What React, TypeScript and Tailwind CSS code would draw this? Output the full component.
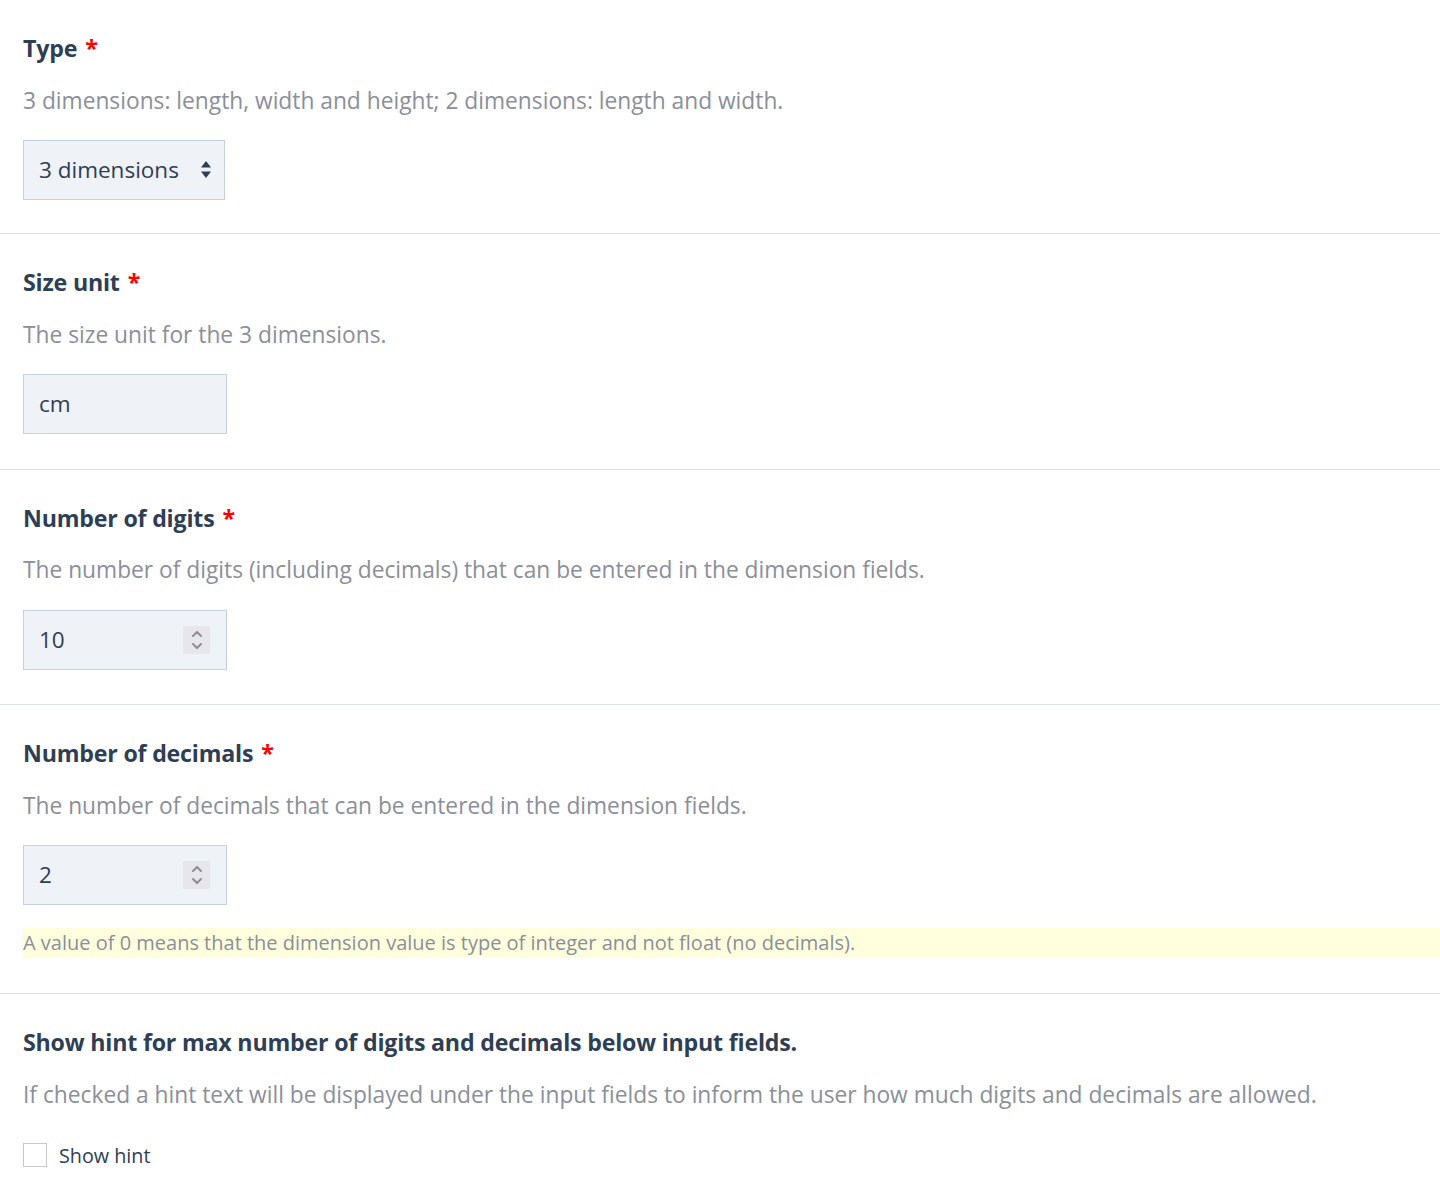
import React from "react";

const font = { fontFamily: '"Open Sans", "Noto Sans", sans-serif' };

function Label({ text, required }: { text: string; required?: boolean }) {
  return (
    <div className="text-[23.2px] leading-[32px] font-bold text-[#2e3e55] tracking-[-0.2px]">
      {text}
      {required && <span className="text-[#ff0000] ml-[8px]">*</span>}
    </div>
  );
}

function Desc({ text }: { text: string }) {
  return <div className="mt-[20.5px] text-[22.75px] leading-[32px] text-[#8a8f9b]">{text}</div>;
}

function Spinner() {
  return (
    <div className="w-[27px] h-[28px] bg-[#e6e6eb] flex items-center justify-center">
      <svg width="14" height="22" viewBox="0 0 14 22" fill="none" stroke="#8e8e99" strokeWidth="2" strokeLinecap="round" strokeLinejoin="round">
        <polyline points="3,7 7,3 11,7" />
        <polyline points="3,15 7,19 11,15" />
      </svg>
    </div>
  );
}

function Section({ children, pb }: { children: React.ReactNode; pb: string }) {
  return <div className={"pl-[23px] pt-[32px] " + pb}>{children}</div>;
}

export default function App() {
  return (
    <div className="w-[1440px] min-h-[1182px] bg-white" style={font}>
      <Section pb="pb-[33.5px] border-b border-[#dde3eb]">
        <Label text="Type" required />
        <Desc text="3 dimensions: length, width and height; 2 dimensions: length and width." />
        <div className="mt-[23px] w-[202px] h-[60px] bg-[#eff3f8] border border-[#c5d1e0] flex items-center justify-between pl-[15px] pr-[13px]">
          <span className="text-[22.5px] text-[#2e3e55]">3 dimensions</span>
          <svg width="10" height="17" viewBox="0 0 10 17" fill="#2e3e55">
            <polygon points="5,0 10,6.5 0,6.5" />
            <polygon points="0,10.5 10,10.5 5,17" />
          </svg>
        </div>
      </Section>
      <Section pb="pb-[34.5px] border-b border-[#dde3eb]">
        <Label text="Size unit" required />
        <Desc text="The size unit for the 3 dimensions." />
        <div className="mt-[23.5px] w-[204px] h-[60px] bg-[#eff3f8] border border-[#c5d1e0] flex items-center pl-[15px]">
          <span className="text-[22.5px] text-[#2e3e55]">cm</span>
        </div>
      </Section>
      <Section pb="pb-[34.5px] border-b border-[#dde3eb]">
        <Label text="Number of digits" required />
        <Desc text="The number of digits (including decimals) that can be entered in the dimension fields." />
        <div className="mt-[23.5px] w-[204px] h-[60px] bg-[#eff3f8] border border-[#c5d1e0] flex items-center justify-between pl-[15px] pr-[16px]">
          <span className="text-[22.5px] text-[#2e3e55]">10</span>
          <Spinner />
        </div>
      </Section>
      <Section pb="pb-[35px] border-b border-[#dde3eb]">
        <Label text="Number of decimals" required />
        <Desc text="The number of decimals that can be entered in the dimension fields." />
        <div className="mt-[23.5px] w-[204px] h-[60px] bg-[#eff3f8] border border-[#c5d1e0] flex items-center justify-between pl-[15px] pr-[16px]">
          <span className="text-[22.5px] text-[#2e3e55]">2</span>
          <Spinner />
        </div>
        <div className="mt-[23px] h-[30px] bg-[#ffffdd] flex items-center text-[20px] text-[#8a8f9b]">
          A value of 0 means that the dimension value is type of integer and not float (no decimals).
        </div>
      </Section>
      <Section pb="pb-[15px]">
        <Label text="Show hint for max number of digits and decimals below input fields." />
        <Desc text="If checked a hint text will be displayed under the input fields to inform the user how much digits and decimals are allowed." />
        <div className="mt-[30px] flex items-center gap-[12px]">
          <div className="w-[24px] h-[24px] border border-[#c8c8cc] bg-white" />
          <span className="text-[19.75px] text-[#2e3e55]">Show hint</span>
        </div>
      </Section>
    </div>
  );
}
